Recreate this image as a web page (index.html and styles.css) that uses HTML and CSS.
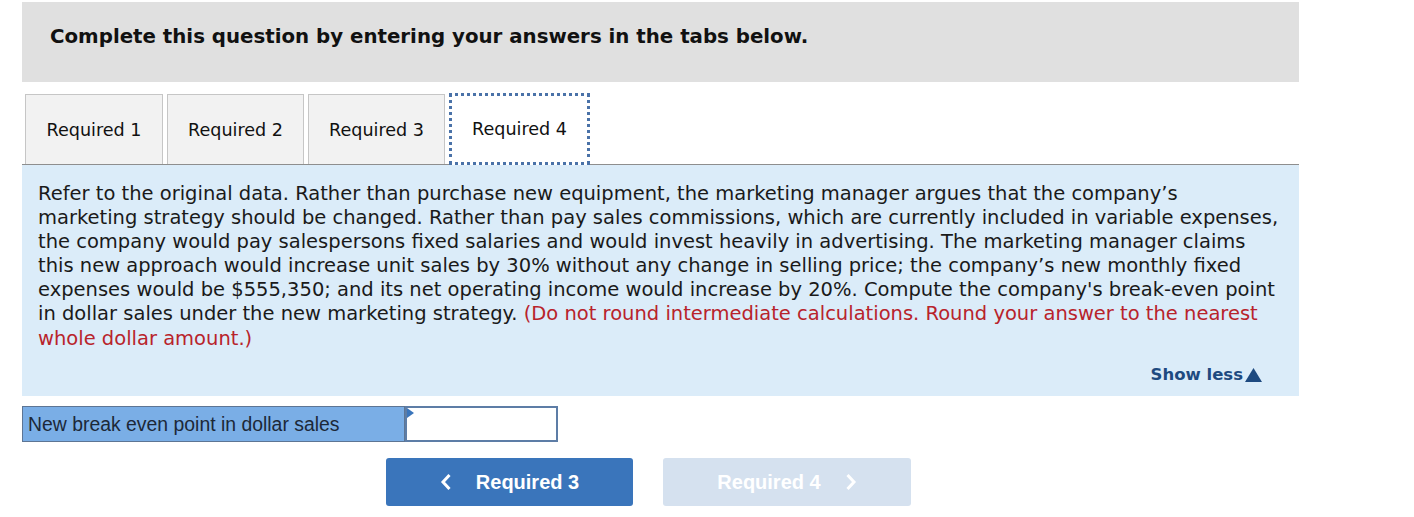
FILE: index.html
```html
<!DOCTYPE html>
<html>
<head>
<meta charset="utf-8">
<link rel="stylesheet" href="styles.css">
</head>
<body>
<div class="page">
  <div class="header">Complete this question by entering your answers in the tabs below.</div>
  <div class="tabs">
    <div class="tab first">Required 1</div>
    <div class="tab">Required 2</div>
    <div class="tab">Required 3</div>
    <div class="tab active">Required 4</div>
  </div>
  <div class="panel">
    <p class="question">Refer to the original data. Rather than purchase new equipment, the marketing manager argues that the company’s<br>marketing strategy should be changed. Rather than pay sales commissions, which are currently included in variable expenses,<br>the company would pay salespersons fixed salaries and would invest heavily in advertising. The marketing manager claims<br>this new approach would increase unit sales by 30% without any change in selling price; the company’s new monthly fixed<br>expenses would be $555,350; and its net operating income would increase by 20%. Compute the company's break-even point<br>in dollar sales under the new marketing strategy. <span class="red">(Do not round intermediate calculations. Round your answer to the nearest<br>whole dollar amount.)</span></p>
    <div class="showless">Show less<svg class="tri" width="17" height="14" viewBox="0 0 17 14"><polygon points="8.5,0 17,14 0,14" fill="#1e4a80"/></svg></div>
  </div>
  <div class="answer">
    <div class="label">New break even point in dollar sales</div>
    <div class="input"><span class="flag"></span></div>
  </div>
  <div class="nav">
    <div class="btn prev"><svg class="chev" width="12" height="18" viewBox="0 0 12 18"><polyline points="9.5,2 3,9 9.5,16" fill="none" stroke="#fff" stroke-width="3"/></svg>Required 3</div>
    <div class="btn next disabled">Required 4<svg class="chev r" width="12" height="18" viewBox="0 0 12 18"><polyline points="2.5,2 9,9 2.5,16" fill="none" stroke="#fff" stroke-width="3"/></svg></div>
  </div>
</div>
</body>
</html>
```
FILE: styles.css
```css
body {
  margin: 0;
  background: #fff;
}
.page {
  width: 1277px;
  padding: 2px 0 0 22px;
  font-family: "DejaVu Sans", Verdana, sans-serif;
}
.header {
  background: #e0e0e0;
  height: 80px;
  box-sizing: border-box;
  padding: 23px 0 0 28px;
  font-weight: bold;
  font-size: 19.8px;
  color: #111;
}
.tabs {
  display: flex;
  gap: 4px;
  margin-top: 12px;
  padding-left: 3px;
  border-bottom: 1px solid #8e8e8e;
  height: 70px;
}
.tab {
  width: 137px;
  height: 70px;
  box-sizing: border-box;
  border: 1px solid #c6c6c6;
  border-bottom: none;
  background: #f2f2f2;
  display: flex;
  align-items: center;
  justify-content: center;
  font-size: 17.6px;
  color: #111;
}
.tab.first {
  width: 138px;
}
.tab.active {
  width: 141px;
  height: 72px;
  margin-top: -1px;
  background: #fff;
  border: 3px dotted #4a72a8;
  position: relative;
  z-index: 1;
}
.panel {
  background: #dbecf9;
  height: 231px;
  box-sizing: border-box;
  padding: 17px 16px 0 16px;
  position: relative;
}
.question {
  margin: 0;
  font-size: 19.5px;
  line-height: 24.1px;
  color: #1a1a1a;
}
.red {
  color: #b8232b;
}
.showless {
  position: absolute;
  right: 37px;
  top: 200px;
  font-weight: bold;
  font-size: 16.5px;
  color: #1e4a80;
  display: flex;
  align-items: center;
}
.tri {
  margin-left: 2px;
}
.answer {
  display: flex;
  margin-top: 10px;
  height: 36px;
}
.label {
  width: 383px;
  box-sizing: border-box;
  background: #7aaee6;
  border: 1px solid #5d7594;
  font-family: "Liberation Sans", Arial, sans-serif;
  font-size: 19.4px;
  color: #1c2838;
  padding: 6px 0 0 5px;
}
.input {
  width: 153px;
  box-sizing: border-box;
  background: #fff;
  border: 2px solid #5d7da6;
  position: relative;
}
.flag {
  position: absolute;
  left: 0;
  top: 0;
  width: 0;
  height: 0;
  border-top: 5px solid transparent;
  border-bottom: 5px solid transparent;
  border-left: 7px solid #3a75bb;
}
.nav {
  display: flex;
  gap: 30px;
  margin-top: 16px;
  padding-left: 364px;
}
.btn {
  width: 247px;
  height: 48px;
  border-radius: 3px;
  display: flex;
  align-items: center;
  justify-content: center;
  font-family: "Liberation Sans", Arial, sans-serif;
  font-weight: bold;
  font-size: 20px;
  color: #fff;
}
.next {
  width: 248px;
}
.prev {
  background: #3a75bb;
}
.disabled {
  background: #d5e1ef;
}
.chev {
  margin-right: 24px;
}
.chev.r {
  margin-right: 0;
  margin-left: 24px;
}
```
